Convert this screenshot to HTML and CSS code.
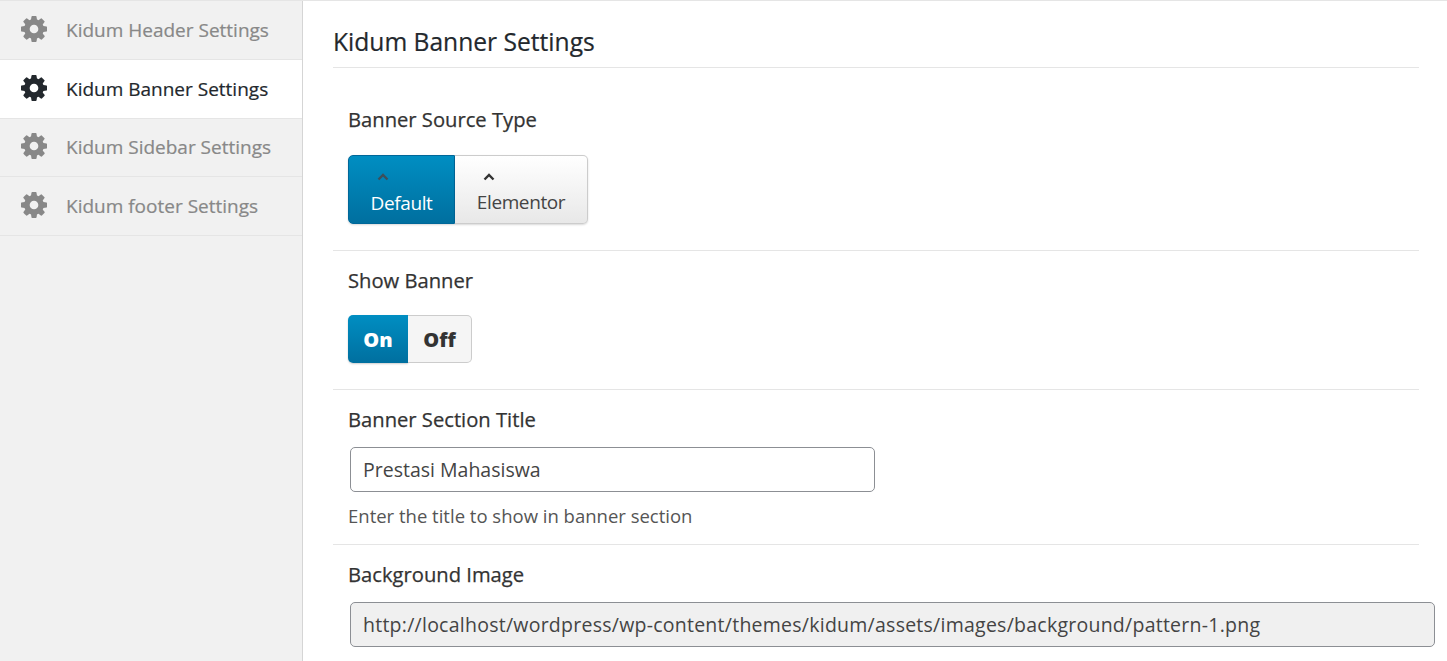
FILE: index.html
```html
<!DOCTYPE html>
<html>
<head>
    <title>Kidum Banner Settings</title>
    <link rel="stylesheet" href="styles.css">
</head>
<body>
    <svg class="icon-defs" width="0" height="0">
        <symbol id="cog" viewBox="128 128 1536 1536">
            <path fill-rule="evenodd" d="M1152 896q0-106-75-181t-181-75-181 75-75 181 75 181 181 75 181-75 75-181zm512-109v222q0 12-8 23t-20 13l-185 28q-19 54-39 91 35 50 107 138 10 12 10 25t-9 23q-27 37-99 108t-94 71q-12 0-26-9l-138-108q-44 23-91 38-16 136-29 186-7 28-36 28h-222q-14 0-24.5-8.5t-11.5-21.5l-28-184q-49-16-90-37l-141 107q-10 9-25 9-14 0-25-11-126-114-165-168-7-10-7-23 0-12 8-23 15-21 51-66.5t54-70.5q-27-50-41-99l-183-27q-13-2-21-12.5t-8-23.5v-222q0-12 8-23t19-13l186-28q14-46 39-92-40-57-107-138-10-12-10-24 0-10 9-23 26-36 98.5-107.5t94.5-71.5q13 0 26 10l138 107q44-23 91-38 16-136 29-186 7-28 36-28h222q14 0 24.5 8.5t11.5 21.5l28 184q49 16 90 37l142-107q9-9 24-9 13 0 25 10 129 119 165 170 7 8 7 22 0 12-8 23-15 21-51 66.5t-54 70.5q26 50 41 98l183 28q13 2 21 12.5t8 23.5z"/>
        </symbol>
        <symbol id="chevron" viewBox="0 0 12 8">
            <path d="M1.5 6.5 L6 2 L10.5 6.5" fill="none" stroke="currentColor" stroke-width="2.4"/>
        </symbol>
    </svg>

    <div class="layout">
        <ul class="side-nav">
            <li class="side-item"><svg class="cog"><use href="#cog"/></svg>Kidum Header Settings</li>
            <li class="side-item active"><svg class="cog"><use href="#cog"/></svg>Kidum Banner Settings</li>
            <li class="side-item"><svg class="cog"><use href="#cog"/></svg>Kidum Sidebar Settings</li>
            <li class="side-item"><svg class="cog"><use href="#cog"/></svg>Kidum footer Settings</li>
        </ul>

        <div class="content">
            <h2 class="page-title">Kidum Banner Settings</h2>

            <div class="section first">
                <div class="field-label">Banner Source Type</div>
                <div class="btn-group source-group">
                    <div class="source-btn selected"><svg class="chevron"><use href="#chevron"/></svg>Default</div>
                    <div class="source-btn"><svg class="chevron"><use href="#chevron"/></svg>Elementor</div>
                </div>
            </div>

            <div class="section">
                <div class="field-label">Show Banner</div>
                <div class="btn-group toggle-group">
                    <div class="toggle-btn on">On</div>
                    <div class="toggle-btn off">Off</div>
                </div>
            </div>

            <div class="section compact">
                <div class="field-label">Banner Section Title</div>
                <input class="text-input" type="text" value="Prestasi Mahasiswa">
                <div class="help-text">Enter the title to show in banner section</div>
            </div>

            <div class="section last">
                <div class="field-label">Background Image</div>
                <input class="text-input wide" type="text" readonly value="http://localhost/wordpress/wp-content/themes/kidum/assets/images/background/pattern-1.png">
            </div>
        </div>
    </div>
</body>
</html>
```

FILE: styles.css
```css
html, body {
    height: 100%;
}
body {
    margin: 0;
    font-family: "Open Sans", "Noto Sans", "Liberation Sans", sans-serif;
    color: #333;
    background-color: #fff;
    overflow: hidden;
}
.icon-defs {
    display: block;
    height: 0;
}
.layout {
    display: flex;
    height: 661px;
    box-sizing: border-box;
    border-top: 1px solid #e5e5e5;
}

/* sidebar */
.side-nav {
    width: 302px;
    flex: none;
    margin: 0;
    padding: 0;
    list-style: none;
    background-color: #f1f1f1;
    border-right: 1px solid #d5d5d5;
}
.side-item {
    display: flex;
    align-items: center;
    height: 58.75px;
    box-sizing: border-box;
    padding-left: 21px;
    border-bottom: 1px solid #e5e5e5;
    font-size: 19px;
    font-weight: 500;
    -webkit-text-stroke: 0.2px currentColor;
    color: #888;
}
.side-item.active {
    background-color: #fff;
    color: #23282d;
}
.cog {
    width: 26px;
    height: 26px;
    margin: 0 19px 2px 0;
    fill: currentColor;
}

/* main panel */
.content {
    flex: 1;
    min-width: 0;
    padding: 0 28px 0 30px;
}
.page-title {
    margin: 0;
    height: 67px;
    box-sizing: border-box;
    padding-top: 24px;
    border-bottom: 1px solid #e5e5e5;
    font-size: 24.6px;
    line-height: 34px;
    font-weight: 500;
    -webkit-text-stroke: 0.2px currentColor;
    color: #23282d;
}
.section {
    padding: 18px 15px 26px;
    border-bottom: 1px solid #e5e5e5;
}
.section.first {
    padding-top: 40px;
}
.section.compact {
    padding-bottom: 16px;
}
.section.last {
    border-bottom: 0;
    padding-right: 0;
}
.field-label {
    padding-bottom: 2px;
    font-size: 20.2px;
    line-height: 22px;
    font-weight: 500;
    -webkit-text-stroke: 0.25px currentColor;
    color: #333;
}
.btn-group {
    display: inline-flex;
    vertical-align: top;
}

/* source type buttons */
.source-group {
    margin-top: 23px;
}
.source-btn {
    display: flex;
    flex-direction: column;
    align-items: center;
    width: 133px;
    height: 69px;
    box-sizing: border-box;
    padding-top: 17px;
    border: 1px solid #ccc;
    border-left: 0;
    border-radius: 0 5px 5px 0;
    background: linear-gradient(#fff, #e8e8e8);
    box-shadow: 0 1px 2px rgba(0,0,0,0.15);
    font-size: 19px;
    line-height: 26px;
    letter-spacing: -0.4px;
    color: #444;
}
.source-btn.selected {
    width: 107px;
    border: 1px solid #006799;
    border-radius: 5px 0 0 5px;
    background: linear-gradient(#008ec2, #006f9f);
    color: #fff;
}
.chevron {
    width: 12px;
    height: 8px;
    margin-right: 64px;
    margin-bottom: 8px;
    color: #333;
}
.source-btn.selected .chevron {
    margin-right: 38px;
    margin-bottom: 9px;
    color: #3d4f5a;
}

/* on / off toggle */
.toggle-group {
    margin-top: 22px;
}
.toggle-btn {
    height: 48px;
    box-sizing: border-box;
    font-size: 20px;
    line-height: 50px;
    font-weight: 800;
    text-align: center;
}
.toggle-btn.on {
    width: 60px;
    border-radius: 5px 0 0 5px;
    background: linear-gradient(#008ec2, #006f9f);
    box-shadow: 0 1px 2px rgba(0,0,0,0.2);
    color: #fff;
}
.toggle-btn.off {
    width: 64px;
    line-height: 48px;
    border: 1px solid #ccc;
    border-left: 0;
    border-radius: 0 5px 5px 0;
    background-color: #f5f5f5;
    color: #333;
}

/* text fields */
.text-input {
    display: block;
    width: 525px;
    height: 45px;
    box-sizing: border-box;
    margin: 15px 0 0 2px;
    padding: 0 12px;
    border: 1px solid #8c8f94;
    border-radius: 5px;
    background-color: #fff;
    font-family: inherit;
    font-size: 19.5px;
    color: #444;
}
.text-input.wide {
    width: 1085px;
    letter-spacing: 0.25px;
    background-color: #f0f0f0;
}
.help-text {
    margin-top: 12px;
    font-size: 18.5px;
    line-height: 24px;
    color: #555;
}
```
